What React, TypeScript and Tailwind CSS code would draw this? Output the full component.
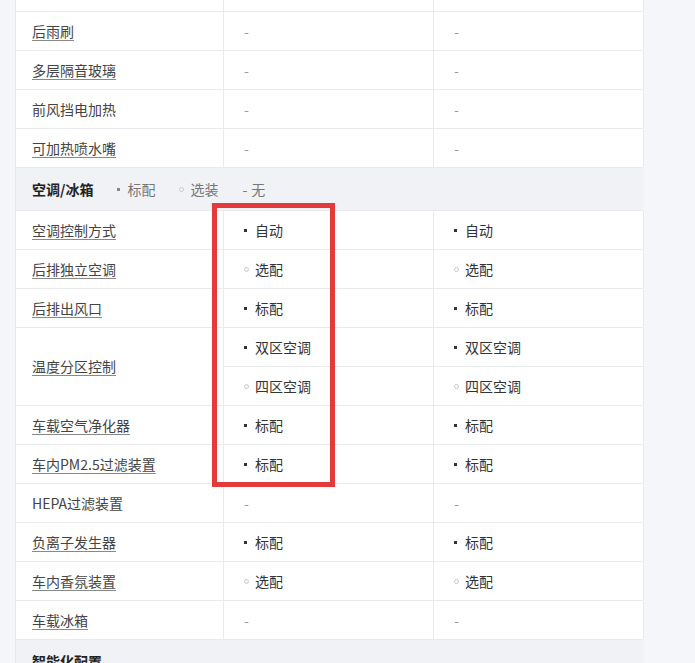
import React from "react";

type V = "-" | [("s" | "o"), string];

type Row =
  | { kind: "row"; label: string; u: boolean; vals: V[][] }
  | { kind: "header"; title: string; legend?: boolean };

const font = { fontFamily: '"Noto Sans CJK SC", "Noto Sans", sans-serif' };

const rows: Row[] = [
  { kind: "row", label: "后雨刷", u: true, vals: [["-"], ["-"]] },
  { kind: "row", label: "多层隔音玻璃", u: true, vals: [["-"], ["-"]] },
  { kind: "row", label: "前风挡电加热", u: false, vals: [["-"], ["-"]] },
  { kind: "row", label: "可加热喷水嘴", u: true, vals: [["-"], ["-"]] },
  { kind: "header", title: "空调/冰箱", legend: true },
  { kind: "row", label: "空调控制方式", u: true, vals: [[["s", "自动"]], [["s", "自动"]]] },
  { kind: "row", label: "后排独立空调", u: true, vals: [[["o", "选配"]], [["o", "选配"]]] },
  { kind: "row", label: "后排出风口", u: true, vals: [[["s", "标配"]], [["s", "标配"]]] },
  {
    kind: "row",
    label: "温度分区控制",
    u: true,
    vals: [
      [["s", "双区空调"], ["o", "四区空调"]],
      [["s", "双区空调"], ["o", "四区空调"]],
    ],
  },
  { kind: "row", label: "车载空气净化器", u: true, vals: [[["s", "标配"]], [["s", "标配"]]] },
  { kind: "row", label: "车内PM2.5过滤装置", u: true, vals: [[["s", "标配"]], [["s", "标配"]]] },
  { kind: "row", label: "HEPA过滤装置", u: false, vals: [["-"], ["-"]] },
  { kind: "row", label: "负离子发生器", u: true, vals: [[["s", "标配"]], [["s", "标配"]]] },
  { kind: "row", label: "车内香氛装置", u: true, vals: [[["o", "选配"]], [["o", "选配"]]] },
  { kind: "row", label: "车载冰箱", u: true, vals: [["-"], ["-"]] },
  { kind: "header", title: "智能化配置" },
];

function Dot({ t }: { t: "s" | "o" }) {
  return t === "s" ? (
    <span className="inline-block w-[3px] h-[3px] bg-[#333] mr-[8px]" />
  ) : (
    <span className="inline-block w-[5px] h-[5px] rounded-full border border-[#c8c8cc] mr-[6px]" />
  );
}

function ValueCell({ v, last }: { v: V; last: boolean }) {
  return (
    <div
      className={`flex items-center pl-[20px] ${
        last ? "h-[38px]" : "h-[39px] border-b border-[#e9eaee]"
      }`}
    >
      {v === "-" ? (
        <span className="text-[14px] text-[#999]">-</span>
      ) : (
        <span className="flex items-center text-[14px] text-[#333]">
          <Dot t={v[0]} />
          {v[1]}
        </span>
      )}
    </div>
  );
}

export default function App() {
  return (
    <div
      className="relative w-[695px] h-[663px] overflow-hidden bg-[#f5f6fa] pl-[15px]"
      style={font}
    >
      <div className="w-[628px] border-l border-[#e6e7eb]">
        <div className="grid grid-cols-[208px_210px_210px] h-[12px] bg-white border-b border-[#e9eaee]">
          <div className="border-r border-[#e9eaee]" />
          <div className="border-r border-[#e9eaee]" />
          <div className="border-r border-[#e9eaee]" />
        </div>
        {rows.map((r, i) =>
          r.kind === "header" ? (
            <div
              key={i}
              className="h-[43px] flex items-center pl-[16px] bg-[#f1f2f6] border-b border-[#e9eaee]"
            >
              <span className="text-[14px] font-bold text-[#222]">{r.title}</span>
              {r.legend && (
                <div className="flex items-center ml-[24px] gap-[24px] text-[14px] text-[#777]">
                  <span className="flex items-center">
                    <span className="inline-block w-[3px] h-[3px] bg-[#888] mr-[7px]" />
                    标配
                  </span>
                  <span className="flex items-center">
                    <span className="inline-block w-[5px] h-[5px] rounded-full border border-[#ccc] mr-[6px]" />
                    选装
                  </span>
                  <span className="flex items-center">
                    <span className="mr-[4px]">-</span>无
                  </span>
                </div>
              )}
            </div>
          ) : (
            <div
              key={i}
              className="grid grid-cols-[208px_210px_210px] bg-white border-b border-[#e9eaee]"
            >
              <div className="flex items-center pl-[16px] border-r border-[#e9eaee] min-h-[38px]">
                <span
                  className={`text-[14px] text-[#444] ${
                    r.u ? "underline underline-offset-[3px] decoration-[#888]" : ""
                  }`}
                >
                  {r.label}
                </span>
              </div>
              {r.vals.map((col, ci) => (
                <div key={ci} className="flex flex-col border-r border-[#e9eaee]">
                  {col.map((v, vi) => (
                    <ValueCell key={vi} v={v} last={vi === col.length - 1} />
                  ))}
                </div>
              ))}
            </div>
          )
        )}
      </div>
      <div className="absolute left-[212px] top-[203px] w-[123px] h-[284px] border-[5px] border-[#e33b3b] pointer-events-none" />
    </div>
  );
}
